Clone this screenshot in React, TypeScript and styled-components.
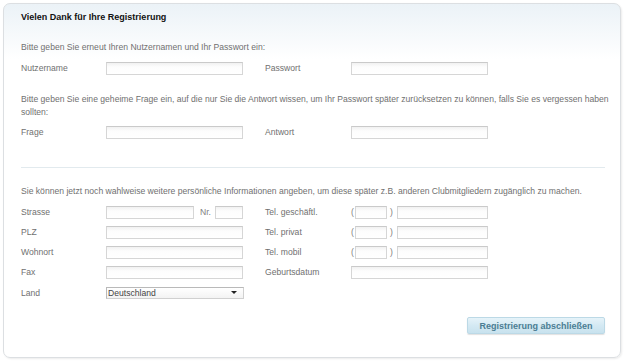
import React from "react";
import styled, { createGlobalStyle } from "styled-components";

const Global = createGlobalStyle`
  html, body { margin: 0; padding: 0; background: #ffffff; }
  body { font-family: "Liberation Sans", Arial, sans-serif; }
`;

const Panel = styled.div`
  box-sizing: border-box;
  margin: 3px;
  width: 618px;
  height: 355px;
  border: 1px solid #dcdfe2;
  border-radius: 7px;
  box-shadow: 1px 1px 2px rgba(0, 0, 0, 0.08);
  background: linear-gradient(to bottom, #ebf2f7 0px, #f6f9fb 30px, #ffffff 55px, #ffffff 100%);
  padding: 7px 15px 0 17px;
  color: #707070;
  font-size: 8.6px;
`;

const Title = styled.h1`
  margin: 0;
  font-size: 9px;
  line-height: 12px;
  font-weight: bold;
  color: #111;
`;

const Para = styled.p<{ $mt: number }>`
  margin: ${(p) => p.$mt}px 0 0 0;
  line-height: 13px;
  white-space: nowrap;
`;

const Row = styled.div<{ $mt?: number }>`
  display: flex;
  align-items: center;
  height: 20px;
  margin-top: ${(p) => p.$mt ?? 0}px;
`;

const Label = styled.span<{ $w: number }>`
  width: ${(p) => p.$w}px;
  flex: none;
`;

const Input = styled.input<{ $w: number }>`
  box-sizing: border-box;
  width: ${(p) => p.$w}px;
  height: 13px;
  margin: 0;
  padding: 0 2px;
  border: 1px solid #d6d6d6;
  border-top-color: #cacaca;
  background: linear-gradient(to bottom, #f1f1f1 0px, #fdfdfd 4px, #ffffff 100%);
  flex: none;
  outline: none;
`;

const Field = styled.div<{ $w: number }>`
  width: ${(p) => p.$w}px;
  flex: none;
  display: flex;
  align-items: center;
`;

const Mark = styled.span<{ $w: number; $pl?: number }>`
  width: ${(p) => p.$w}px;
  padding-left: ${(p) => p.$pl ?? 0}px;
  box-sizing: border-box;
  flex: none;
  color: #808080;
`;

const Rule = styled.div`
  height: 1px;
  background: #e2eaee;
  margin-top: 25px;
`;

const SelectBox = styled.div`
  position: relative;
  box-sizing: border-box;
  width: 138px;
  height: 12px;
  border: 1px solid #b9b9b9;
  border-right-color: #d0d0d0;
  border-bottom-color: #d0d0d0;
  background: linear-gradient(to bottom, #ffffff, #f3f3f3);
  color: #444;
  font-size: 8.6px;
  line-height: 10px;
  padding-left: 1px;
  flex: none;
  &::after {
    content: "";
    position: absolute;
    right: 6px;
    top: 3px;
    border-left: 3px solid transparent;
    border-right: 3px solid transparent;
    border-top: 3px solid #222;
  }
`;

const Footer = styled.div`
  display: flex;
  justify-content: flex-end;
  margin-top: 14px;
`;

const Button = styled.button`
  box-sizing: border-box;
  width: 138px;
  height: 17px;
  padding: 0;
  border: 1px solid #bcd9e6;
  border-radius: 2px;
  background: linear-gradient(to bottom, #e6f3f9 0%, #d4e9f3 50%, #c8e2ee 100%);
  box-shadow: 0 1px 1px rgba(0, 0, 0, 0.12);
  color: #4b7d93;
  font-family: "Liberation Sans", Arial, sans-serif;
  font-weight: bold;
  font-size: 9px;
  cursor: pointer;
`;

export default function App() {
  return (
    <>
      <Global />
      <Panel>
        <Title>Vielen Dank für Ihre Registrierung</Title>
        <Para $mt={18}>Bitte geben Sie erneut Ihren Nutzernamen und Ihr Passwort ein:</Para>
        <Row $mt={4}>
          <Label $w={85}>Nutzername</Label>
          <Field $w={159}><Input $w={137} /></Field>
          <Label $w={86}>Passwort</Label>
          <Input $w={137} type="password" />
        </Row>
        <Para $mt={15}>
          Bitte geben Sie eine geheime Frage ein, auf die nur Sie die Antwort wissen, um Ihr Passwort später zurücksetzen zu können, falls Sie es vergessen haben
          <br />
          sollten:
        </Para>
        <Row $mt={3}>
          <Label $w={85}>Frage</Label>
          <Field $w={159}><Input $w={137} /></Field>
          <Label $w={86}>Antwort</Label>
          <Input $w={137} />
        </Row>
        <Rule />
        <Para $mt={17}>
          Sie können jetzt noch wahlweise weitere persönliche Informationen angeben, um diese später z.B. anderen Clubmitgliedern zugänglich zu machen.
        </Para>
        <Row $mt={4}>
          <Label $w={85}>Strasse</Label>
          <Field $w={159}>
            <Input $w={88} />
            <Mark $w={21} $pl={6}>Nr.</Mark>
            <Input $w={28} />
          </Field>
          <Label $w={86}>Tel. geschäftl.</Label>
          <Mark $w={4}>(</Mark>
          <Input $w={32} />
          <Mark $w={10} $pl={3}>)</Mark>
          <Input $w={91} />
        </Row>
        <Row>
          <Label $w={85}>PLZ</Label>
          <Field $w={159}><Input $w={137} /></Field>
          <Label $w={86}>Tel. privat</Label>
          <Mark $w={4}>(</Mark>
          <Input $w={32} />
          <Mark $w={10} $pl={3}>)</Mark>
          <Input $w={91} />
        </Row>
        <Row>
          <Label $w={85}>Wohnort</Label>
          <Field $w={159}><Input $w={137} /></Field>
          <Label $w={86}>Tel. mobil</Label>
          <Mark $w={4}>(</Mark>
          <Input $w={32} />
          <Mark $w={10} $pl={3}>)</Mark>
          <Input $w={91} />
        </Row>
        <Row>
          <Label $w={85}>Fax</Label>
          <Field $w={159}><Input $w={137} /></Field>
          <Label $w={86}>Geburtsdatum</Label>
          <Input $w={137} />
        </Row>
        <Row $mt={1}>
          <Label $w={85}>Land</Label>
          <SelectBox>Deutschland</SelectBox>
        </Row>
        <Footer>
          <Button>Registrierung abschließen</Button>
        </Footer>
      </Panel>
    </>
  );
}
